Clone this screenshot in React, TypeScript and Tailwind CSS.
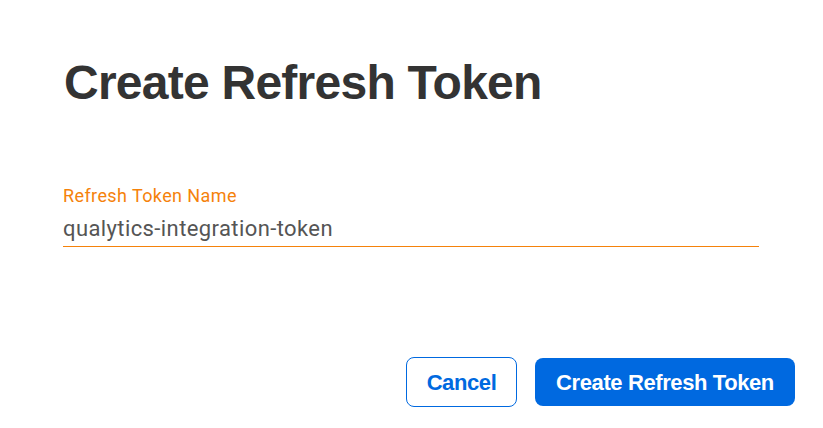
import { useState } from "react";

export default function App() {
  const [name, setName] = useState("qualytics-integration-token");

  return (
    <div className="w-[823px] h-[428px] bg-white font-['Liberation_Sans',Arial,sans-serif] flex flex-col px-[64px] pt-[55px]">
      <h1 className="text-[48px] leading-[56px] font-bold text-[#333333] tracking-[-0.75px]">
        Create Refresh Token
      </h1>

      <label className="mt-[75px] flex flex-col font-['Roboto',sans-serif]">
        <span className="text-[18px] leading-[20px] text-[#f5820b] tracking-[0.4px] -ml-px">
          Refresh Token Name
        </span>
        <input
          value={name}
          onChange={(e) => setName(e.target.value)}
          className="mt-[5px] -ml-px h-[36px] border-b border-[#f5820b] font-['Roboto',sans-serif] text-[22px] text-[#555555] tracking-[0.4px] outline-none"
        />
      </label>

      <div className="mt-[110px] flex items-center justify-end gap-[18px] -mr-[36px]">
        <button className="h-[50px] w-[111px] rounded-[8px] border border-[#0069e0] text-[#0069e0] text-[22px] font-bold tracking-[-0.4px]">
          Cancel
        </button>
        <button className="h-[48px] w-[260px] rounded-[8px] bg-[#0069e0] text-white text-[22px] font-bold tracking-[-0.4px]">
          Create Refresh Token
        </button>
      </div>
    </div>
  );
}
